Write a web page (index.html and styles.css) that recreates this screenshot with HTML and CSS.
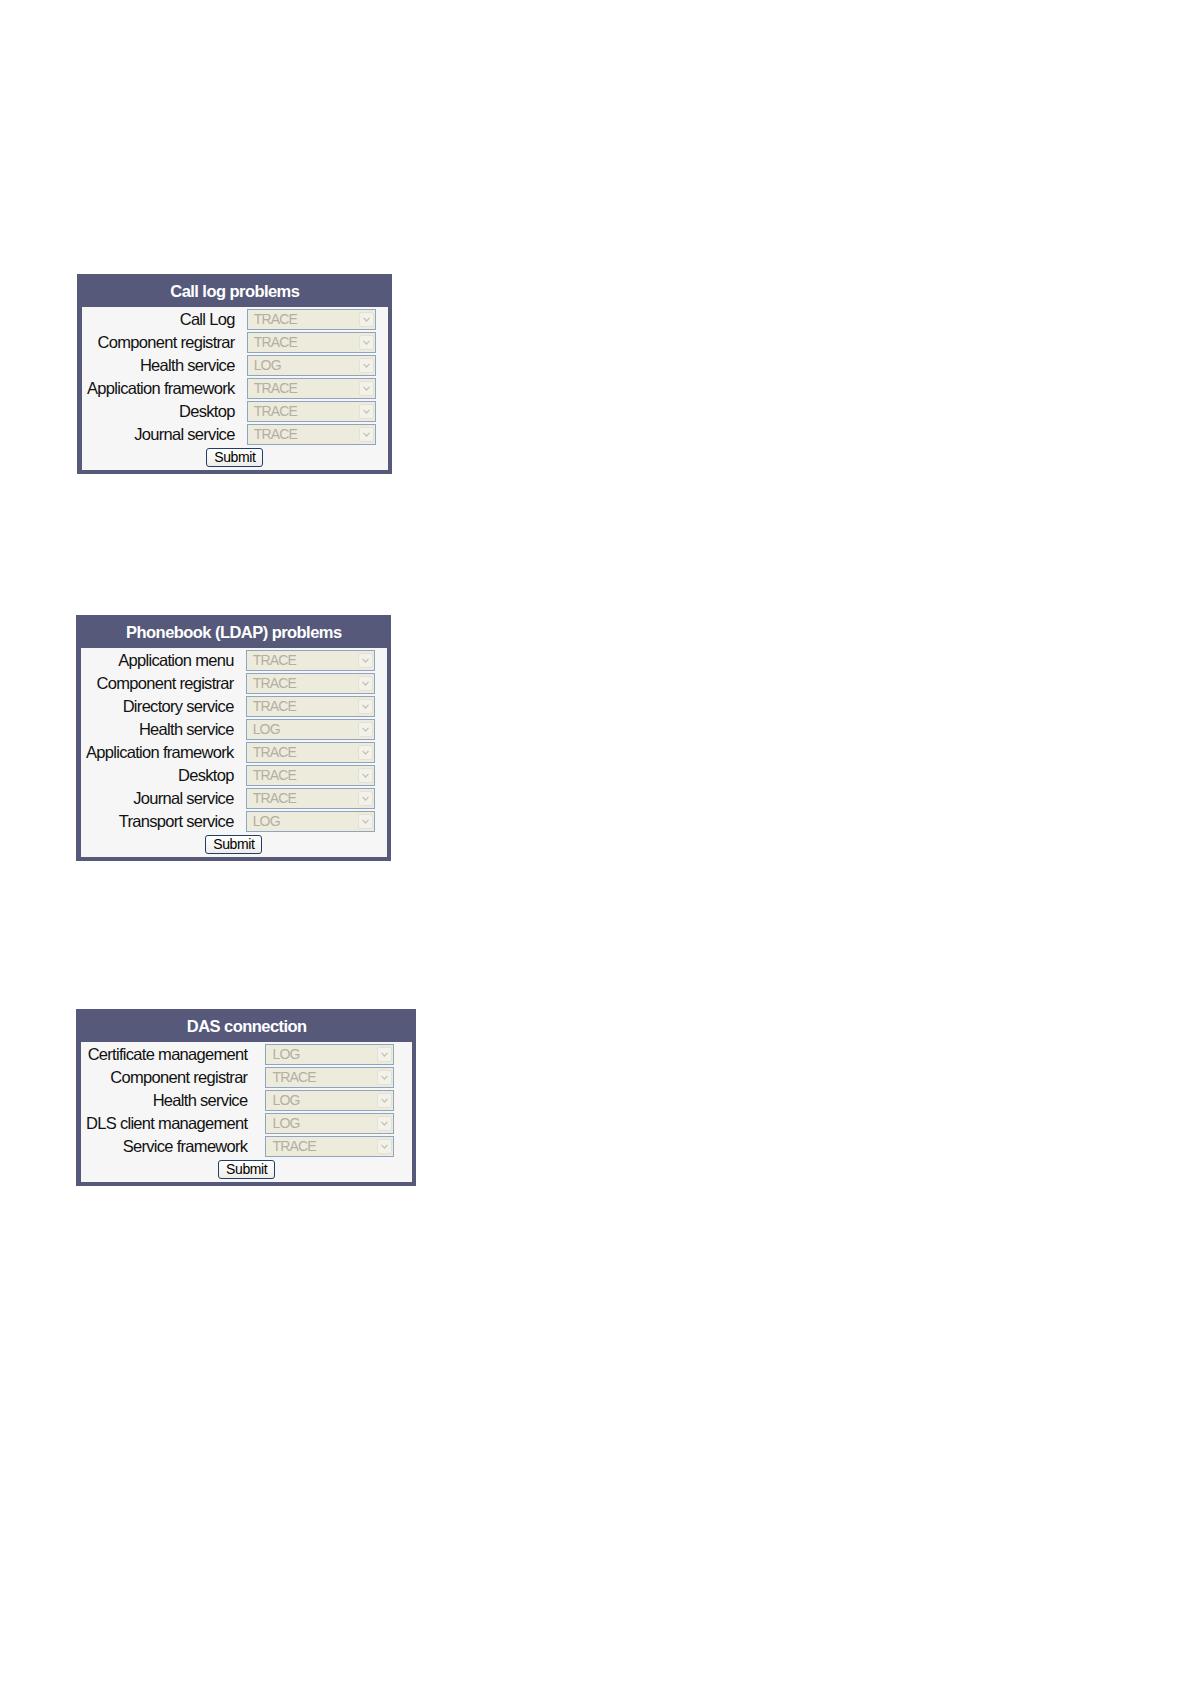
FILE: index.html
```html
<!DOCTYPE html>
<html lang="en">
<head>
<meta charset="utf-8">
<title>Trace settings</title>
<link rel="stylesheet" href="styles.css">
</head>
<body>
<main class="page">

  <section class="panel panel--calllog">
    <h2 class="panel-title">Call log problems</h2>
    <form class="panel-body">
      <div class="fields">
        <span class="label">Call Log</span>
        <div class="select"><span class="select-value">TRACE</span><span class="select-arrow"><svg width="7" height="5" viewBox="0 0 7 5"><path d="M0.5 0.8 L3.5 4 L6.5 0.8" fill="none" stroke="#c4c1b4" stroke-width="1.2"/></svg></span></div>
        <span class="label">Component registrar</span>
        <div class="select"><span class="select-value">TRACE</span><span class="select-arrow"><svg width="7" height="5" viewBox="0 0 7 5"><path d="M0.5 0.8 L3.5 4 L6.5 0.8" fill="none" stroke="#c4c1b4" stroke-width="1.2"/></svg></span></div>
        <span class="label">Health service</span>
        <div class="select"><span class="select-value">LOG</span><span class="select-arrow"><svg width="7" height="5" viewBox="0 0 7 5"><path d="M0.5 0.8 L3.5 4 L6.5 0.8" fill="none" stroke="#c4c1b4" stroke-width="1.2"/></svg></span></div>
        <span class="label">Application framework</span>
        <div class="select"><span class="select-value">TRACE</span><span class="select-arrow"><svg width="7" height="5" viewBox="0 0 7 5"><path d="M0.5 0.8 L3.5 4 L6.5 0.8" fill="none" stroke="#c4c1b4" stroke-width="1.2"/></svg></span></div>
        <span class="label">Desktop</span>
        <div class="select"><span class="select-value">TRACE</span><span class="select-arrow"><svg width="7" height="5" viewBox="0 0 7 5"><path d="M0.5 0.8 L3.5 4 L6.5 0.8" fill="none" stroke="#c4c1b4" stroke-width="1.2"/></svg></span></div>
        <span class="label">Journal service</span>
        <div class="select"><span class="select-value">TRACE</span><span class="select-arrow"><svg width="7" height="5" viewBox="0 0 7 5"><path d="M0.5 0.8 L3.5 4 L6.5 0.8" fill="none" stroke="#c4c1b4" stroke-width="1.2"/></svg></span></div>
      </div>
      <div class="actions"><button type="button" class="submit">Submit</button></div>
    </form>
  </section>

  <section class="panel panel--ldap">
    <h2 class="panel-title">Phonebook (LDAP) problems</h2>
    <form class="panel-body">
      <div class="fields">
        <span class="label">Application menu</span>
        <div class="select"><span class="select-value">TRACE</span><span class="select-arrow"><svg width="7" height="5" viewBox="0 0 7 5"><path d="M0.5 0.8 L3.5 4 L6.5 0.8" fill="none" stroke="#c4c1b4" stroke-width="1.2"/></svg></span></div>
        <span class="label">Component registrar</span>
        <div class="select"><span class="select-value">TRACE</span><span class="select-arrow"><svg width="7" height="5" viewBox="0 0 7 5"><path d="M0.5 0.8 L3.5 4 L6.5 0.8" fill="none" stroke="#c4c1b4" stroke-width="1.2"/></svg></span></div>
        <span class="label">Directory service</span>
        <div class="select"><span class="select-value">TRACE</span><span class="select-arrow"><svg width="7" height="5" viewBox="0 0 7 5"><path d="M0.5 0.8 L3.5 4 L6.5 0.8" fill="none" stroke="#c4c1b4" stroke-width="1.2"/></svg></span></div>
        <span class="label">Health service</span>
        <div class="select"><span class="select-value">LOG</span><span class="select-arrow"><svg width="7" height="5" viewBox="0 0 7 5"><path d="M0.5 0.8 L3.5 4 L6.5 0.8" fill="none" stroke="#c4c1b4" stroke-width="1.2"/></svg></span></div>
        <span class="label">Application framework</span>
        <div class="select"><span class="select-value">TRACE</span><span class="select-arrow"><svg width="7" height="5" viewBox="0 0 7 5"><path d="M0.5 0.8 L3.5 4 L6.5 0.8" fill="none" stroke="#c4c1b4" stroke-width="1.2"/></svg></span></div>
        <span class="label">Desktop</span>
        <div class="select"><span class="select-value">TRACE</span><span class="select-arrow"><svg width="7" height="5" viewBox="0 0 7 5"><path d="M0.5 0.8 L3.5 4 L6.5 0.8" fill="none" stroke="#c4c1b4" stroke-width="1.2"/></svg></span></div>
        <span class="label">Journal service</span>
        <div class="select"><span class="select-value">TRACE</span><span class="select-arrow"><svg width="7" height="5" viewBox="0 0 7 5"><path d="M0.5 0.8 L3.5 4 L6.5 0.8" fill="none" stroke="#c4c1b4" stroke-width="1.2"/></svg></span></div>
        <span class="label">Transport service</span>
        <div class="select"><span class="select-value">LOG</span><span class="select-arrow"><svg width="7" height="5" viewBox="0 0 7 5"><path d="M0.5 0.8 L3.5 4 L6.5 0.8" fill="none" stroke="#c4c1b4" stroke-width="1.2"/></svg></span></div>
      </div>
      <div class="actions"><button type="button" class="submit">Submit</button></div>
    </form>
  </section>

  <section class="panel panel--das">
    <h2 class="panel-title">DAS connection</h2>
    <form class="panel-body">
      <div class="fields">
        <span class="label">Certificate management</span>
        <div class="select"><span class="select-value">LOG</span><span class="select-arrow"><svg width="7" height="5" viewBox="0 0 7 5"><path d="M0.5 0.8 L3.5 4 L6.5 0.8" fill="none" stroke="#c4c1b4" stroke-width="1.2"/></svg></span></div>
        <span class="label">Component registrar</span>
        <div class="select"><span class="select-value">TRACE</span><span class="select-arrow"><svg width="7" height="5" viewBox="0 0 7 5"><path d="M0.5 0.8 L3.5 4 L6.5 0.8" fill="none" stroke="#c4c1b4" stroke-width="1.2"/></svg></span></div>
        <span class="label">Health service</span>
        <div class="select"><span class="select-value">LOG</span><span class="select-arrow"><svg width="7" height="5" viewBox="0 0 7 5"><path d="M0.5 0.8 L3.5 4 L6.5 0.8" fill="none" stroke="#c4c1b4" stroke-width="1.2"/></svg></span></div>
        <span class="label">DLS client management</span>
        <div class="select"><span class="select-value">LOG</span><span class="select-arrow"><svg width="7" height="5" viewBox="0 0 7 5"><path d="M0.5 0.8 L3.5 4 L6.5 0.8" fill="none" stroke="#c4c1b4" stroke-width="1.2"/></svg></span></div>
        <span class="label">Service framework</span>
        <div class="select"><span class="select-value">TRACE</span><span class="select-arrow"><svg width="7" height="5" viewBox="0 0 7 5"><path d="M0.5 0.8 L3.5 4 L6.5 0.8" fill="none" stroke="#c4c1b4" stroke-width="1.2"/></svg></span></div>
      </div>
      <div class="actions"><button type="button" class="submit">Submit</button></div>
    </form>
  </section>

</main>
</body>
</html>
```
FILE: styles.css
```css
html, body {
  margin: 0;
  padding: 0;
  background: #ffffff;
}

body {
  font-family: "Liberation Sans", Arial, sans-serif;
  color: #111111;
}

.page {
  display: flex;
  flex-direction: column;
  align-items: flex-start;
  padding-top: 274px;
}

.panel {
  background: #56597a;
  padding: 0 4px 4px 5px;
}

.panel--calllog {
  margin-left: 77px;
}

.panel--ldap {
  margin-left: 76px;
  margin-top: 141px;
}

.panel--das {
  margin-left: 76px;
  margin-top: 148px;
}

.panel-title {
  margin: 0;
  height: 33px;
  line-height: 34px;
  text-align: center;
  color: #ffffff;
  font-size: 16.5px;
  font-weight: bold;
  letter-spacing: -0.55px;
}

.panel-body {
  margin: 0;
  background: #f6f6f6;
  padding: 2px 0 3px;
}

.fields {
  display: grid;
  grid-template-columns: auto 129px;
  column-gap: 12px;
  row-gap: 2px;
  align-items: center;
  padding: 0 12px 0 5px;
}

.panel--das .fields {
  column-gap: 18px;
  padding: 0 18px 0 5px;
}

.label {
  text-align: right;
  font-size: 16.5px;
  line-height: 21px;
  white-space: nowrap;
  letter-spacing: -0.7px;
}

.select {
  box-sizing: border-box;
  height: 21px;
  border: 1px solid #8ea5c0;
  background: #edebdc;
  display: flex;
  align-items: center;
  justify-content: space-between;
  padding: 0 1px 0 6px;
}

.select-value {
  color: #b3b0a2;
  font-size: 14px;
  line-height: 19px;
  letter-spacing: -0.8px;
}

.select-arrow {
  box-sizing: border-box;
  width: 15px;
  height: 15px;
  background: #f2f1ea;
  border: 1px solid #e3e0d4;
  border-radius: 2px;
  display: flex;
  align-items: center;
  justify-content: center;
}

.actions {
  display: flex;
  justify-content: center;
  margin-top: 3px;
}

.submit {
  box-sizing: border-box;
  width: 57px;
  height: 19px;
  padding: 0;
  font-family: "Liberation Sans", Arial, sans-serif;
  font-size: 14px;
  line-height: 17px;
  letter-spacing: -0.4px;
  color: #000000;
  background: linear-gradient(#ffffff, #eeede8);
  border: 1px solid #1f3f6b;
  border-radius: 3px;
}
```
